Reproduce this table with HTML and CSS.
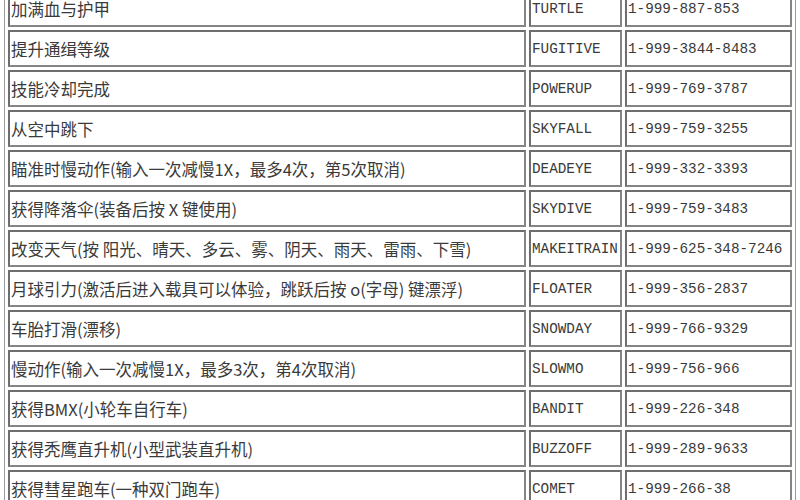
FILE: index.html
```html
<!DOCTYPE html>
<html>
<head>
<meta charset="utf-8">
<link rel="stylesheet" href="styles.css">
</head>
<body>
<table class="cheats">
<tr><td class="desc">加满血与护甲</td><td class="code">TURTLE</td><td class="phone">1-999-887-853</td></tr>
<tr><td class="desc">提升通缉等级</td><td class="code">FUGITIVE</td><td class="phone">1-999-3844-8483</td></tr>
<tr><td class="desc">技能冷却完成</td><td class="code">POWERUP</td><td class="phone">1-999-769-3787</td></tr>
<tr><td class="desc">从空中跳下</td><td class="code">SKYFALL</td><td class="phone">1-999-759-3255</td></tr>
<tr><td class="desc">瞄准时慢动作(输入一次减慢1X，最多4次，第5次取消)</td><td class="code">DEADEYE</td><td class="phone">1-999-332-3393</td></tr>
<tr><td class="desc">获得降落伞(装备后按 X 键使用)</td><td class="code">SKYDIVE</td><td class="phone">1-999-759-3483</td></tr>
<tr><td class="desc">改变天气(按 阳光、晴天、多云、雾、阴天、雨天、雷雨、下雪)</td><td class="code">MAKEITRAIN</td><td class="phone">1-999-625-348-7246</td></tr>
<tr><td class="desc">月球引力(激活后进入载具可以体验，跳跃后按 o(字母) 键漂浮)</td><td class="code">FLOATER</td><td class="phone">1-999-356-2837</td></tr>
<tr><td class="desc">车胎打滑(漂移)</td><td class="code">SNOWDAY</td><td class="phone">1-999-766-9329</td></tr>
<tr><td class="desc">慢动作(输入一次减慢1X，最多3次，第4次取消)</td><td class="code">SLOWMO</td><td class="phone">1-999-756-966</td></tr>
<tr><td class="desc">获得BMX(小轮车自行车)</td><td class="code">BANDIT</td><td class="phone">1-999-226-348</td></tr>
<tr><td class="desc">获得秃鹰直升机(小型武装直升机)</td><td class="code">BUZZOFF</td><td class="phone">1-999-289-9633</td></tr>
<tr><td class="desc">获得彗星跑车(一种双门跑车)</td><td class="code">COMET</td><td class="phone">1-999-266-38</td></tr>
</table>
</body>
</html>
```
FILE: styles.css
```css
html, body {
  margin: 0;
  padding: 0;
  background: #ffffff;
  overflow: hidden;
}
.cheats {
  margin: -14px 0 0 4px;
  border: 1px solid #9a9a9a;
  border-collapse: separate;
  border-spacing: 3px;
  table-layout: fixed;
  width: 792px;
  color: #3a3a3a;
}
.cheats td {
  box-sizing: border-box;
  height: 37px;
  border: 2px solid #858585;
  border-top-color: #6e6e6e;
  border-left-color: #6e6e6e;
  padding: 0 0 0 1px;
  vertical-align: middle;
  white-space: nowrap;
  overflow: hidden;
}
.desc {
  width: 518px;
  padding-left: 0;
  font-family: "Noto Sans CJK SC", sans-serif;
  font-size: 16.5px;
}
.code, .phone {
  font-family: "Liberation Mono", "Noto Sans CJK SC", monospace;
  font-size: 14.3px;
}
.code {
  width: 93px;
}
.phone {
  width: 167px;
}
```
